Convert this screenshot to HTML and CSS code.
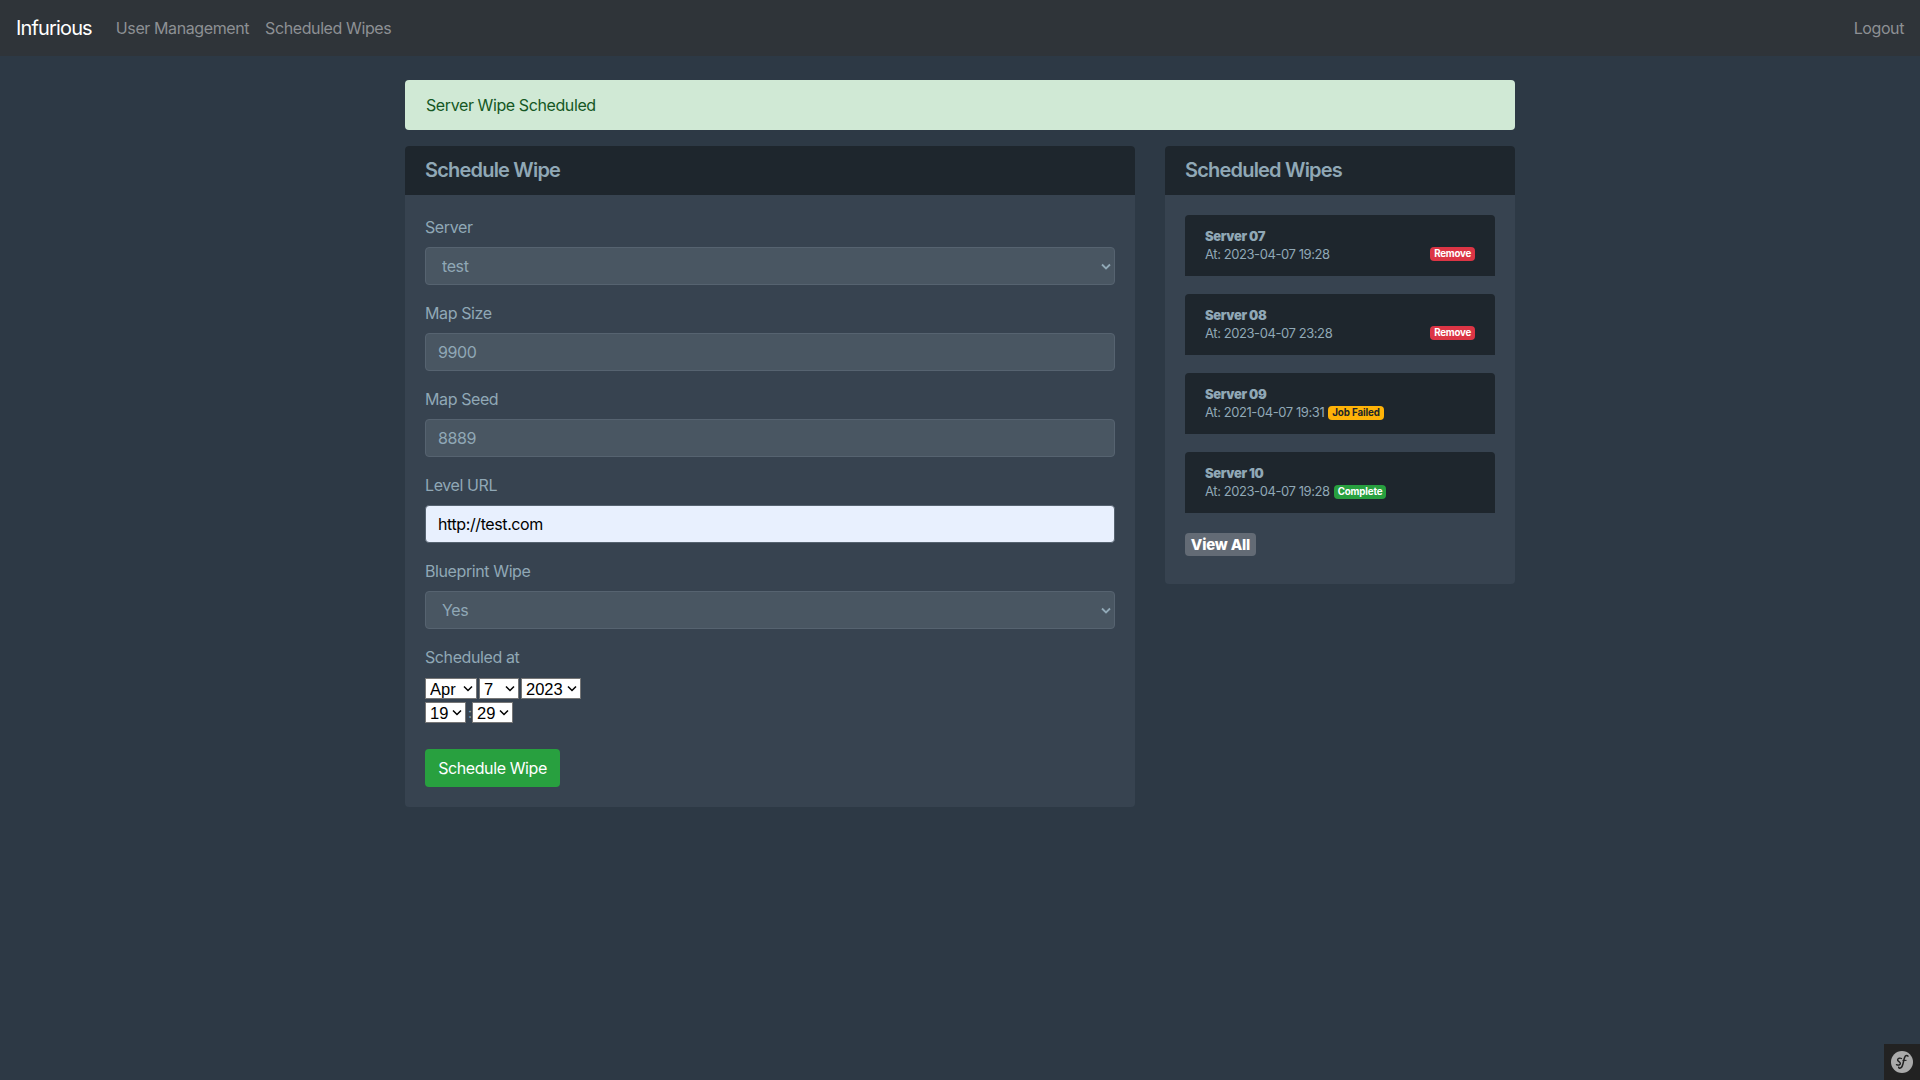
FILE: index.html
```html
<!DOCTYPE html>
<html lang="en">
<head>
    <meta charset="UTF-8">
    <title>Infurious - Schedule Wipe</title>
    <link rel="stylesheet" href="styles.css">
</head>
<body>
    <nav class="navbar">
        <a class="brand" href="#">Infurious</a>
        <a class="nav-link" href="#">User Management</a>
        <a class="nav-link" href="#">Scheduled Wipes</a>
        <a class="nav-link logout" href="#">Logout</a>
    </nav>

    <div class="container">
        <div class="alert">Server Wipe Scheduled</div>

        <div class="columns">
            <div class="card card-main">
                <h4 class="card-header">Schedule Wipe</h4>
                <form class="card-body">
                    <div class="form-group">
                        <label for="server">Server</label>
                        <select id="server" class="form-control"><option>test</option></select>
                    </div>
                    <div class="form-group">
                        <label for="size">Map Size</label>
                        <input id="size" class="form-control" type="text" value="9900">
                    </div>
                    <div class="form-group">
                        <label for="seed">Map Seed</label>
                        <input id="seed" class="form-control" type="text" value="8889">
                    </div>
                    <div class="form-group">
                        <label for="url">Level URL</label>
                        <input id="url" class="form-control autofilled" type="text" value="http://test.com">
                    </div>
                    <div class="form-group">
                        <label for="blueprint">Blueprint Wipe</label>
                        <select id="blueprint" class="form-control"><option>Yes</option></select>
                    </div>
                    <div class="form-group date-group">
                        <label>Scheduled at</label>
                        <div class="date-row">
                            <select class="mini w-month"><option>Apr</option></select>
                            <select class="mini w-day"><option>7</option></select>
                            <select class="mini w-year"><option>2023</option></select>
                        </div>
                        <div class="date-row">
                            <select class="mini w-hour"><option>19</option></select>
                            <span class="colon">:</span>
                            <select class="mini w-hour"><option>29</option></select>
                        </div>
                    </div>
                    <button class="btn-success" type="button">Schedule Wipe</button>
                </form>
            </div>

            <div class="card card-side">
                <h4 class="card-header">Scheduled Wipes</h4>
                <div class="card-body">
                    <div class="wipe">
                        <div class="wipe-name">Server 07</div>
                        <div class="wipe-at">At: 2023-04-07 19:28 <a class="badge badge-danger push-right" href="#">Remove</a></div>
                    </div>
                    <div class="wipe">
                        <div class="wipe-name">Server 08</div>
                        <div class="wipe-at">At: 2023-04-07 23:28 <a class="badge badge-danger push-right" href="#">Remove</a></div>
                    </div>
                    <div class="wipe">
                        <div class="wipe-name">Server 09</div>
                        <div class="wipe-at">At: 2021-04-07 19:31 <span class="badge badge-warning">Job Failed</span></div>
                    </div>
                    <div class="wipe">
                        <div class="wipe-name">Server 10</div>
                        <div class="wipe-at">At: 2023-04-07 19:28 <span class="badge badge-success">Complete</span></div>
                    </div>
                    <a class="view-all" href="#">View All</a>
                </div>
            </div>
        </div>
    </div>

    <div class="sf-toolbar">
        <svg width="24" height="24" viewBox="0 0 24 24">
            <circle cx="12" cy="12" r="11" fill="#aaa"/>
            <path d="M18 6.2c-.6-1-2-.9-2.800.1-1 1.300-1.300 3.400-1.900 6.200-.6 2.900-1.100 5.200-3 5.600-.9.200-1.500-.2-1.600-.8" fill="none" stroke="#222" stroke-width="1.500" stroke-linecap="round"/>
            <path d="M11.500 8.500c-1.500-.8-3.500-.3-3.900 1.100-.5 1.800 3.200 2.300 2.800 4.100-.3 1.300-2.200 1.900-3.900 1" fill="none" stroke="#222" stroke-width="1.400" stroke-linecap="round"/>
            <path d="M12.500 10.400h4" fill="none" stroke="#222" stroke-width="1.100"/>
        </svg>
    </div>
</body>
</html>
```

FILE: styles.css
```css
* {
    box-sizing: border-box;
}
body {
    margin: 0;
    min-height: 1080px;
    background: #2d3945;
    color: #90a8b6;
    font-family: Inter, "Liberation Sans", sans-serif;
    font-size: 16px;
    line-height: 24px;
    letter-spacing: -0.4px;
}
a {
    text-decoration: none;
}

.navbar {
    display: flex;
    align-items: center;
    height: 56px;
    padding: 0 16px;
    background: #2f3439;
}
.brand {
    margin-right: 16px;
    color: #fff;
    font-size: 20px;
    letter-spacing: -0.85px;
}
.nav-link {
    padding: 0 8px;
    color: #8d9094;
}
.logout {
    margin-left: auto;
    padding-right: 0;
}

.container {
    width: 1110px;
    margin: 0 auto;
    padding-top: 24px;
}
.alert {
    height: 50px;
    padding: 13px 21px;
    margin-bottom: 16px;
    border-radius: 4px;
    background: #d0e9d5;
    color: #155724;
}
.columns {
    display: flex;
    align-items: flex-start;
    gap: 30px;
}

.card {
    background: #374350;
    border-radius: 4px;
}
.card-main {
    width: 730px;
}
.card-side {
    width: 350px;
}
.card-header {
    height: 49px;
    margin: 0;
    padding: 12px 20px;
    background: #1e262d;
    border-radius: 4px 4px 0 0;
    font-size: 20px;
    font-weight: 600;
    line-height: 24px;
    letter-spacing: -0.8px;
}
.card-body {
    display: block;
    padding: 20px;
}

.form-group {
    margin-bottom: 16px;
}
label {
    display: block;
    margin-bottom: 8px;
}
.form-control {
    display: block;
    width: 100%;
    height: 38px;
    padding: 6px 12px;
    background-color: #495662;
    border: 1px solid #566370;
    border-radius: 4px;
    color: #90a8b6;
    font: inherit;
    letter-spacing: -0.4px;
    outline: none;
}
select.form-control {
    appearance: none;
    padding-left: 16px;
    background-image: url("data:image/svg+xml,%3Csvg xmlns='http://www.w3.org/2000/svg' width='10' height='7' viewBox='0 0 10 7'%3E%3Cpath d='M1 1.500l4 4 4-4' fill='none' stroke='%2390a8b6' stroke-width='1.800'/%3E%3C/svg%3E");
    background-repeat: no-repeat;
    background-position: right 3px center;
}
.autofilled {
    background-color: #e8f0fe;
    color: #000;
}

.date-group {
    margin-bottom: 26px;
}
.date-group label {
    margin-bottom: 9px;
}
.date-row {
    display: flex;
    height: 21px;
    margin-bottom: 3px;
    gap: 2px;
}
.mini {
    appearance: none;
    height: 21px;
    padding: 0 0 0 4px;
    background: #fff url("data:image/svg+xml,%3Csvg xmlns='http://www.w3.org/2000/svg' width='10' height='7' viewBox='0 0 10 7'%3E%3Cpath d='M1 1.500l4 4 4-4' fill='none' stroke='%23000' stroke-width='1.500'/%3E%3C/svg%3E") no-repeat right 3px center;
    border: 1px solid #767676;
    border-radius: 0;
    color: #000;
    font-family: "Liberation Sans", sans-serif;
    font-size: 16.500px;
    letter-spacing: 0;
}
.w-month {
    width: 52px;
}
.w-day {
    width: 40px;
}
.w-year {
    width: 60px;
}
.w-hour {
    width: 41px;
}
.colon {
    width: 2px;
    font-size: 14px;
    line-height: 21px;
}

.btn-success {
    display: block;
    width: 135px;
    height: 38px;
    padding: 0;
    background: #28a03f;
    border: 0;
    border-radius: 4px;
    color: #fff;
    font: inherit;
    letter-spacing: -0.4px;
}

.wipe {
    height: 61px;
    margin-bottom: 18px;
    padding: 12px 20px 0;
    background: #1e262d;
    border-radius: 4px 4px 0 0;
    font-size: 13px;
    line-height: 18px;
    letter-spacing: -0.42px;
}
.wipe-name {
    font-weight: 900;
    letter-spacing: -0.35px;
}
.wipe-at {
    display: flex;
    align-items: center;
    height: 18px;
    gap: 4px;
}
.badge {
    height: 14px;
    padding: 0 4px;
    border-radius: 4px;
    font-size: 9.750px;
    font-weight: 700;
    line-height: 14px;
    letter-spacing: -0.1px;
}
.badge-warning,
.badge-success {
    margin-top: 2px;
}
.push-right {
    margin-left: auto;
}
.badge-danger {
    background: #dc3545;
    color: #fff;
    letter-spacing: -0.25px;
}
.badge-warning {
    background: #ffb307;
    color: #212529;
}
.badge-success {
    background: #28a03f;
    color: #fff;
    letter-spacing: -0.15px;
}
.view-all {
    display: block;
    width: 71px;
    height: 23px;
    margin-top: 20px;
    margin-bottom: 8px;
    background: #636b75;
    border-radius: 4px;
    color: #fff;
    font-weight: 800;
    font-size: 15px;
    line-height: 23px;
    letter-spacing: -0.2px;
    text-align: center;
}

.sf-toolbar {
    position: fixed;
    right: 0;
    bottom: 0;
    display: flex;
    align-items: center;
    justify-content: center;
    width: 36px;
    height: 36px;
    background: #222;
}
```
